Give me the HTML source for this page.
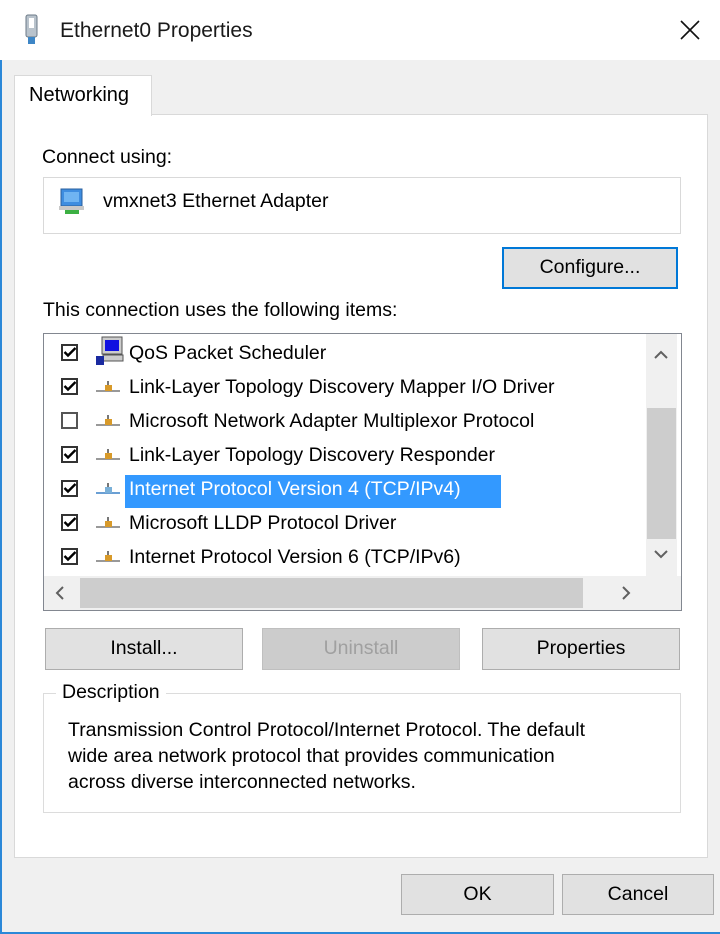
<!DOCTYPE html>
<html><head><meta charset="utf-8"><style>
*{box-sizing:border-box;margin:0;padding:0}
body{width:720px;height:934px;background:#f0f0f0;font-family:"Liberation Sans",sans-serif;font-size:19.5px;color:#000;position:relative;overflow:hidden}
.abs{position:absolute}
.win{position:absolute;left:0;top:0;width:720px;height:934px;border-left:2px solid #2b88d8;border-bottom:2px solid #2b88d8;border-top:1px solid #9ec7ea}
.title{position:absolute;left:0;top:0;width:720px;height:60px;background:#fff}
.btn{position:absolute;background:#e1e1e1;border:1px solid #adadad;text-align:center;line-height:39px}
.cb{position:absolute;width:17px;height:17px;border:2px solid #333;background:#fff}
.ck{position:absolute;left:19px;top:9px}
.row{position:absolute;left:0;height:30px;line-height:30px;white-space:nowrap}
</style></head><body>
<div class="win"></div>
<div class="title"></div>
<svg class="abs" style="left:24px;top:14px" width="16" height="32" viewBox="0 0 16 32"><rect x="2" y="1" width="11" height="22" rx="2" fill="#b9c3cc" stroke="#6b7a87"/><rect x="5" y="4" width="5" height="10" fill="#fff"/><rect x="4" y="23" width="7" height="7" fill="#3d86c6"/></svg>
<div class="abs" style="left:60px;top:19px;font-size:21px;color:#1a1a1a">Ethernet0 Properties</div>
<svg class="abs" style="left:679px;top:19px" width="22" height="22"><path d="M2 2L20 20M20 2L2 20" stroke="#111" stroke-width="1.6"/></svg>

<div class="abs" style="left:14px;top:114px;width:694px;height:744px;background:#fff;border:1px solid #d9d9d9"></div>
<div class="abs" style="left:14px;top:75px;width:138px;height:41px;background:#fff;border:1px solid #d9d9d9;border-bottom:none"></div>
<div class="abs" style="left:29px;top:84px;font-size:20px">Networking</div>

<div class="abs" style="left:42px;top:146px">Connect using:</div>
<div class="abs" style="left:43px;top:177px;width:638px;height:57px;border:1px solid #d9d9d9;background:#fff"></div>
<svg class="abs" style="left:58px;top:186px" width="28" height="30"><rect x="3" y="3" width="21" height="17" fill="#3e8de0" stroke="#2a5f9c"/><rect x="6" y="6" width="15" height="10" fill="#6fb4f2"/><rect x="1" y="20" width="25" height="4" fill="#c8c8c8"/><rect x="7" y="24" width="14" height="4" fill="#3cb043"/></svg>
<div class="abs" style="left:103px;top:190px">vmxnet3 Ethernet Adapter</div>

<div class="btn" style="left:502px;top:247px;width:176px;height:42px;border:2px solid #0078d7;line-height:37px">Configure...</div>
<div class="abs" style="left:43px;top:299px">This connection uses the following items:</div>

<div class="abs" style="left:43px;top:333px;width:639px;height:278px;border:1px solid #828790;background:#fff;overflow:hidden">
 <div class="abs" style="left:602px;top:0;width:31px;height:242px;background:#f0f0f0"></div>
 <div class="abs" style="left:603px;top:74px;width:29px;height:131px;background:#cdcdcd"></div>
 <svg class="abs" style="left:608px;top:214px" width="18" height="14"><path d="M3 3L9 9L15 3" stroke="#606060" stroke-width="2" fill="none"/></svg>
 <svg class="abs" style="left:608px;top:14px" width="18" height="14"><path d="M3 10L9 4L15 10" stroke="#606060" stroke-width="2" fill="none"/></svg>
 <div class="abs" style="left:0;top:242px;width:637px;height:34px;background:#f0f0f0"></div>
 <div class="abs" style="left:36px;top:244px;width:503px;height:30px;background:#cdcdcd"></div>
 <svg class="abs" style="left:8px;top:250px" width="16" height="18"><path d="M11 3L5 9L11 15" stroke="#606060" stroke-width="2" fill="none"/></svg>
 <svg class="abs" style="left:574px;top:250px" width="16" height="18"><path d="M5 3L11 9L5 15" stroke="#606060" stroke-width="2" fill="none"/></svg>
</div>
<div class="abs" style="left:125px;top:475px;width:376px;height:33px;background:#3399ff"></div>

<div class="abs" style="left:44px;top:337px">
 <div class="cb" style="left:17px;top:7px"></div><svg class="ck" width="14" height="12"><path d="M1.5 6L5 9.5L12.5 2" stroke="#000" stroke-width="2.4" fill="none"/></svg>
 <svg class="abs" style="left:50px;top:-1px" width="32" height="30"><rect x="8" y="1" width="20" height="17" fill="#ccc" stroke="#555"/><rect x="11" y="4" width="14" height="11" fill="#1010e0"/><rect x="9" y="19" width="20" height="6" fill="#ccc" stroke="#555"/><rect x="2" y="20" width="8" height="9" fill="#1a2aa0"/></svg>
 <div class="row" style="left:85px;top:1px">QoS Packet Scheduler</div>
</div>
<div class="abs" style="left:44px;top:371px">
 <div class="cb" style="left:17px;top:7px"></div><svg class="ck" width="14" height="12"><path d="M1.5 6L5 9.5L12.5 2" stroke="#000" stroke-width="2.4" fill="none"/></svg>
 <svg class="abs" style="left:52px;top:9px" width="24" height="14"><path d="M0 11H24" stroke="#999" stroke-width="2"/><rect x="9" y="5" width="7" height="6" fill="#d89a2a"/><rect x="11" y="1" width="2" height="4" fill="#777"/></svg>
 <div class="row" style="left:85px;top:1px">Link-Layer Topology Discovery Mapper I/O Driver</div>
</div>
<div class="abs" style="left:44px;top:405px">
 <div class="cb" style="left:17px;top:7px;border-color:#555"></div>
 <svg class="abs" style="left:52px;top:9px" width="24" height="14"><path d="M0 11H24" stroke="#999" stroke-width="2"/><rect x="9" y="5" width="7" height="6" fill="#d89a2a"/><rect x="11" y="1" width="2" height="4" fill="#777"/></svg>
 <div class="row" style="left:85px;top:1px">Microsoft Network Adapter Multiplexor Protocol</div>
</div>
<div class="abs" style="left:44px;top:439px">
 <div class="cb" style="left:17px;top:7px"></div><svg class="ck" width="14" height="12"><path d="M1.5 6L5 9.5L12.5 2" stroke="#000" stroke-width="2.4" fill="none"/></svg>
 <svg class="abs" style="left:52px;top:9px" width="24" height="14"><path d="M0 11H24" stroke="#999" stroke-width="2"/><rect x="9" y="5" width="7" height="6" fill="#d89a2a"/><rect x="11" y="1" width="2" height="4" fill="#777"/></svg>
 <div class="row" style="left:85px;top:1px">Link-Layer Topology Discovery Responder</div>
</div>
<div class="abs" style="left:44px;top:473px">
 <div class="cb" style="left:17px;top:7px"></div><svg class="ck" width="14" height="12"><path d="M1.5 6L5 9.5L12.5 2" stroke="#000" stroke-width="2.4" fill="none"/></svg>
 <svg class="abs" style="left:52px;top:9px" width="24" height="14"><path d="M0 11H24" stroke="#6a9fd4" stroke-width="2"/><rect x="9" y="5" width="7" height="6" fill="#7ab0d8"/><rect x="11" y="1" width="2" height="4" fill="#777"/></svg>
 <div class="row" style="left:85px;top:1px;color:#fff">Internet Protocol Version 4 (TCP/IPv4)</div>
</div>
<div class="abs" style="left:44px;top:507px">
 <div class="cb" style="left:17px;top:7px"></div><svg class="ck" width="14" height="12"><path d="M1.5 6L5 9.5L12.5 2" stroke="#000" stroke-width="2.4" fill="none"/></svg>
 <svg class="abs" style="left:52px;top:9px" width="24" height="14"><path d="M0 11H24" stroke="#999" stroke-width="2"/><rect x="9" y="5" width="7" height="6" fill="#d89a2a"/><rect x="11" y="1" width="2" height="4" fill="#777"/></svg>
 <div class="row" style="left:85px;top:1px">Microsoft LLDP Protocol Driver</div>
</div>
<div class="abs" style="left:44px;top:541px">
 <div class="cb" style="left:17px;top:7px"></div><svg class="ck" width="14" height="12"><path d="M1.5 6L5 9.5L12.5 2" stroke="#000" stroke-width="2.4" fill="none"/></svg>
 <svg class="abs" style="left:52px;top:9px" width="24" height="14"><path d="M0 11H24" stroke="#999" stroke-width="2"/><rect x="9" y="5" width="7" height="6" fill="#d89a2a"/><rect x="11" y="1" width="2" height="4" fill="#777"/></svg>
 <div class="row" style="left:85px;top:1px">Internet Protocol Version 6 (TCP/IPv6)</div>
</div>

<div class="btn" style="left:45px;top:628px;width:198px;height:42px">Install...</div>
<div class="btn" style="left:262px;top:628px;width:198px;height:42px;background:#cccccc;border-color:#bfbfbf;color:#a0a0a0">Uninstall</div>
<div class="btn" style="left:482px;top:628px;width:198px;height:42px">Properties</div>

<div class="abs" style="left:43px;top:693px;width:638px;height:120px;border:1px solid #dcdcdc"></div>
<div class="abs" style="left:56px;top:681px;background:#fff;padding:0 6px">Description</div>
<div class="abs" style="left:68px;top:717px;line-height:26px;width:620px;white-space:nowrap">Transmission Control Protocol/Internet Protocol. The default<br>wide area network protocol that provides communication<br>across diverse interconnected networks.</div>

<div class="btn" style="left:401px;top:874px;width:153px;height:41px">OK</div>
<div class="btn" style="left:562px;top:874px;width:152px;height:41px">Cancel</div>
</body></html>
